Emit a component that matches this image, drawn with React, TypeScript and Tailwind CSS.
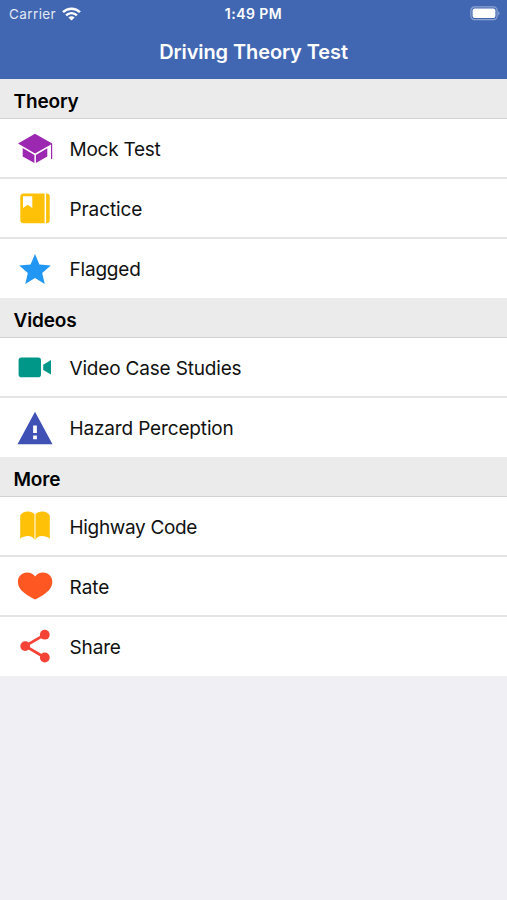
import type { ReactNode } from "react";
import { IoMdStar, IoMdWarning } from "react-icons/io";

type Item = {
  label: string;
  icon: ReactNode;
  tracking: string;
};

type Section = {
  title: string;
  items: Item[];
};

const SchoolIcon = () => (
  <svg className="size-[40px] text-[#9c27b0]" viewBox="0 0 40 40" fill="currentColor">
    <path d="M3 15.6 20 5.8l17.2 9.8V31H36V16.4l-16 9.1z" />
    <path d="M7.700 20.100 19.400 26.900v8.200L7.700 28.600zM32.300 20.200 20.900 26.900v8.200l11.400-6.500z" />
  </svg>
);

const JournalIcon = () => (
  <svg className="size-[40px] text-[#ffc107]" viewBox="0 0 40 40" fill="currentColor">
    <path d="M8.6 5.6h21v29.6h-21a3.3 3.3 0 0 1-3.3-3.3v-23a3.3 3.3 0 0 1 3.3-3.3z" />
    <path d="M31.1 5.6h.6a3 3 0 0 1 3 3v23.600a3 3 0 0 1-3 3h-.6z" />
    <path d="M8 8.3h9.3v11.600l-4.600-3.100L8 19.900z" fill="#fff" />
  </svg>
);

const VideoIcon = () => (
  <svg className="size-[40px] text-[#009688]" viewBox="0 0 40 40" fill="currentColor">
    <rect x="3.6" y="10.4" width="22.4" height="19.8" rx="2.8" />
    <path d="m28.200 17.700 7.800-4.600v14.400l-7.800-4.600z" />
  </svg>
);

const BookIcon = () => (
  <svg className="size-[40px] text-[#ffc107]" viewBox="0 0 40 40" fill="currentColor">
    <path d="M19.500 8v26c-1-2.400-3.300-4-6.500-4-3.200 0-6 .8-7.800 2.800V9.500C6.600 6.700 9.400 5.400 12.600 5.400s5.400.8 6.900 2.600z" />
    <path d="M20.500 8v26c1-2.400 3.300-4 6.500-4 3.200 0 6 .8 7.800 2.800V9.500c-1.400-2.800-4.200-4.100-7.400-4.100s-5.400.8-6.900 2.600z" />
  </svg>
);

const HeartIcon = () => (
  <svg className="size-[40px] text-[#ff5722]" viewBox="0 0 40 40" fill="currentColor">
    <path d="M28 6.600c-3.200 0-6 1.200-7.900 3.900-1.900-2.700-4.700-3.900-7.900-3.900-5.200 0-9.300 4.100-9.300 9.200 0 3 1.200 6 3.400 8.500 3.300 3.700 8.500 6.500 13.800 9.200 5.300-2.700 10.500-5.500 13.800-9.200 2.200-2.500 3.400-5.500 3.400-8.500 0-5.100-4.100-9.200-9.300-9.200z" />
  </svg>
);

const ShareIcon = () => (
  <svg className="size-[40px] text-[#f44336]" viewBox="0 0 40 40" fill="currentColor">
    <path d="M29.800 8.600 10.200 20l19.600 11.500" fill="none" stroke="currentColor" strokeWidth="2.7" />
    <circle cx="29.8" cy="8.7" r="4.9" />
    <circle cx="10.2" cy="20.1" r="4.9" />
    <circle cx="29.8" cy="31.5" r="4.9" />
  </svg>
);

const sections: Section[] = [
  {
    title: "Theory",
    items: [
      { label: "Mock Test", icon: <SchoolIcon />, tracking: "tracking-[-0.25px]" },
      { label: "Practice", icon: <JournalIcon />, tracking: "tracking-[-0.1px]" },
      { label: "Flagged", icon: <IoMdStar className="mt-px size-[40px] text-[#2196f3]" />, tracking: "tracking-[-0.2px]" },
    ],
  },
  {
    title: "Videos",
    items: [
      { label: "Video Case Studies", icon: <VideoIcon />, tracking: "tracking-[-0.18px]" },
      { label: "Hazard Perception", icon: <IoMdWarning className="mt-px size-[40px] text-[#3f51b5]" />, tracking: "tracking-[-0.15px]" },
    ],
  },
  {
    title: "More",
    items: [
      { label: "Highway Code", icon: <BookIcon />, tracking: "tracking-[-0.33px]" },
      { label: "Rate", icon: <HeartIcon />, tracking: "tracking-normal" },
      { label: "Share", icon: <ShareIcon />, tracking: "tracking-[-0.15px]" },
    ],
  },
];

const Wifi = () => (
  <svg className="h-[14px] w-[19px]" viewBox="0 0 19 14" fill="none" stroke="#fff" strokeWidth="2.4">
    <path d="M1 5.200a12.200 12.200 0 0 1 17 0" />
    <path d="M4.100 8.300a7.700 7.700 0 0 1 10.800 0" />
    <path d="M9.500 13.600 6.400 10.500a4.400 4.400 0 0 1 6.200 0z" fill="#fff" stroke="none" />
  </svg>
);

const Battery = () => (
  <svg className="h-[15px] w-[31px]" viewBox="0 0 31 15">
    <rect x="0.9" y="0.9" width="26.2" height="12.8" rx="3.6" fill="none" stroke="#fff" strokeOpacity="0.4" strokeWidth="1.2" />
    <rect x="2.6" y="2.6" width="22.8" height="9.4" rx="2" fill="#fff" />
    <path d="M28.300 5.200c1.600.6 1.600 3.600 0 4.200z" fill="#fff" fillOpacity="0.45" />
  </svg>
);

const Header = () => {
  return (
    <header className="h-[79px] bg-[#4267b2] text-white">
      <div className="flex h-[27px] items-center justify-between pl-[9px] pr-[6px] text-[13.5px]">
        <div className="flex flex-1 items-center gap-[6px]">
          <span className="pt-px tracking-[0.4px] opacity-85">Carrier</span>
          <Wifi />
        </div>
        <span className="mr-[3px] text-[14px] font-semibold tracking-[0.45px]">1:49 PM</span>
        <div className="flex flex-1 justify-end">
          <Battery />
        </div>
      </div>
      <h1 className="flex h-[50px] items-center justify-center text-[20px] font-semibold tracking-[-0.1px]">
        Driving Theory Test
      </h1>
    </header>
  );
};

const Row = ({ item, last }: { item: Item; last: boolean }) => {
  return (
    <li
      className={`flex items-center bg-white pl-[15px] ${
        last ? "h-[59px] pb-px" : "h-[60px] border-b-2 border-[#e4e4e5]"
      }`}
    >
      <div className="flex size-[40px] shrink-0 items-center justify-center">{item.icon}</div>
      <span className={`ml-[14.5px] pt-[4px] text-[19px] leading-6 text-[#111] ${item.tracking}`}>{item.label}</span>
    </li>
  );
};

const App = () => {
  return (
    <div className="min-h-screen bg-[#efeff4] font-['Inter',sans-serif]">
      <Header />
      <main>
        {sections.map((section) => (
          <section key={section.title}>
            <h2 className="flex h-[40px] items-center border-b border-[#d2d2d4] bg-[#ebebeb] pl-[13.5px] pt-[7px] text-[19px] font-semibold tracking-[-0.15px] text-black">
              {section.title}
            </h2>
            <ul>
              {section.items.map((item, i) => (
                <Row key={item.label} item={item} last={i === section.items.length - 1} />
              ))}
            </ul>
          </section>
        ))}
      </main>
    </div>
  );
};

export default App;
